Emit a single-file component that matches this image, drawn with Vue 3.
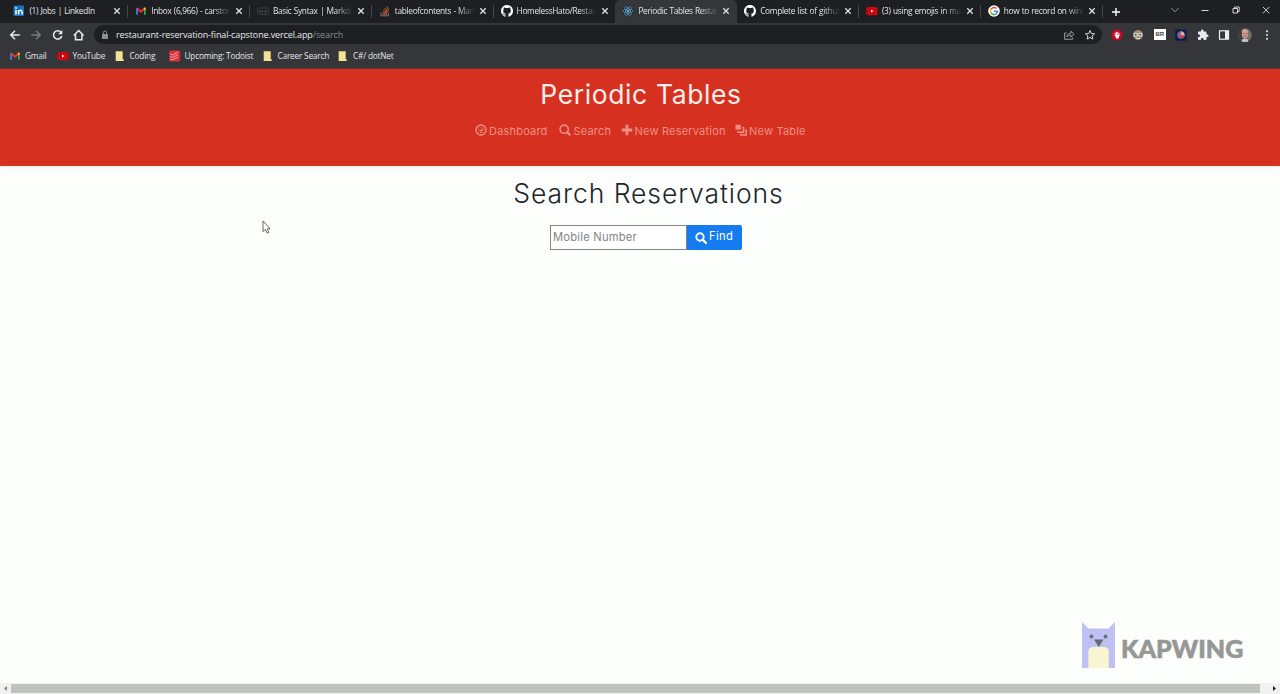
<script setup>
const tabs = [
  { icon: 'linkedin', title: '(1) Jobs | LinkedIn' },
  { icon: 'gmail', title: 'Inbox (6,966) - carston', fade: true },
  { icon: 'md', title: 'Basic Syntax | Markdo', fade: true },
  { icon: 'so', title: 'tableofcontents - Mark', fade: true },
  { icon: 'github', title: 'HomelessHato/Restau', fade: true },
  { icon: 'react', title: 'Periodic Tables Restau', fade: true, active: true },
  { icon: 'github', title: 'Complete list of github', fade: true },
  { icon: 'youtube', title: '(3) using emojis in ma', fade: true },
  { icon: 'google', title: 'how to record on wind', fade: true },
]
const bookmarks = [
  { icon: 'gmail', title: 'Gmail', w: 47.5 },
  { icon: 'youtube', title: 'YouTube', w: 57 },
  { icon: 'folder', title: 'Coding', w: 55 },
  { icon: 'todoist', title: 'Upcoming: Todoist', w: 93 },
  { icon: 'folder', title: 'Career Search', w: 75.5 },
  { icon: 'folder', title: 'C#/ dotNet', w: 70 },
]
</script>

<template>
  <svg class="defs" aria-hidden="true">
    <symbol id="linkedin" viewBox="0 0 12 12">
      <rect x=".5" y=".5" width="10.500" height="10.500" rx="1" fill="#1674bd" />
      <path d="M3 5v4.500M5.600 9.500V5M5.600 7c0-2.200 3.400-2.300 3.400 0v2.500" stroke="#fff" stroke-width="1.500" fill="none" />
      <circle cx="3" cy="3" r=".9" fill="#fff" />
    </symbol>
    <symbol id="gmail" viewBox="0 0 12 12">
      <path d="M2 9.800V3" stroke="#4285f4" stroke-width="1.700" />
      <path d="M9.800 9.800V4" stroke="#34a853" stroke-width="1.700" />
      <path d="M1.900 3 5.900 6.700 9.900 3" stroke="#e0392f" stroke-width="1.900" fill="none" />
      <path d="M9.800 5V2.600" stroke="#fbbc04" stroke-width="1.700" />
    </symbol>
    <symbol id="md" viewBox="0 0 12 12">
      <rect x=".5" y="3" width="11" height="6.500" rx="1" fill="none" stroke="#3b3d40" />
      <path d="M2.500 8V5l1.400 1.600L5.300 5v3M8.500 4.700v3M7.200 6.500l1.300 1.500 1.300-1.500" fill="none" stroke="#46484b" stroke-width=".9" />
    </symbol>
    <symbol id="so" viewBox="0 0 12 12">
      <path d="M2 7.500v3.300h7.500V7.500" stroke="#777" fill="none" />
      <path d="M3.500 9.200h4.500M3.600 7.400l4.500.7M4.300 5.300l4 2M5.800 3.200l3.100 3.300M8 1.500l1.700 4" stroke="#b9542c" stroke-width="1.100" />
    </symbol>
    <symbol id="github" viewBox="0 0 16 16">
      <path fill="#fff" d="M8 0C3.58 0 0 3.58 0 8c0 3.540 2.290 6.530 5.470 7.590.4.070.55-.17.55-.38 0-.19-.01-.82-.01-1.490-2.010.37-2.530-.49-2.690-.94-.09-.23-.48-.94-.82-1.130-.28-.15-.68-.52-.01-.53.63-.01 1.080.58 1.230.82.72 1.210 1.870.87 2.330.66.07-.52.28-.87.51-1.070-1.780-.2-3.640-.89-3.640-3.950 0-.87.31-1.590.82-2.150-.08-.2-.36-1.020.08-2.120 0 0 .67-.21 2.200.82a7.500 7.500 0 0 1 4 0c1.530-1.040 2.200-.82 2.200-.82.44 1.100.16 1.920.08 2.120.51.56.82 1.270.82 2.150 0 3.070-1.870 3.750-3.650 3.950.29.25.54.73.54 1.480 0 1.070-.01 1.930-.01 2.200 0 .21.15.46.55.38A8 8 0 0 0 16 8c0-4.420-3.580-8-8-8z" />
    </symbol>
    <symbol id="react" viewBox="0 0 12 12">
      <circle cx="6" cy="6" r="5.500" fill="#202c35" />
      <g fill="none" stroke="#5793b5" stroke-width=".8">
        <ellipse cx="6" cy="6" rx="5" ry="2" />
        <ellipse cx="6" cy="6" rx="5" ry="2" transform="rotate(60 6 6)" />
        <ellipse cx="6" cy="6" rx="5" ry="2" transform="rotate(120 6 6)" />
      </g>
      <circle cx="6" cy="6" r="1" fill="#8bc5e0" />
    </symbol>
    <symbol id="youtube" viewBox="0 0 12 12">
      <rect x=".3" y="2" width="11.200" height="8.300" rx="1.600" fill="#c90812" />
      <path d="M5 4.700 7.500 6.100 5 7.600z" fill="#fff" />
    </symbol>
    <symbol id="google" viewBox="0 0 12 12">
      <circle cx="6" cy="6" r="5.800" fill="#fff" />
      <g fill="none" stroke-width="1.500">
        <path d="M8.600 3.600A3.500 3.500 0 0 0 3 4.300" stroke="#ea4335" />
        <path d="M3 4.300a3.500 3.500 0 0 0 0 3.500" stroke="#fbbc05" />
        <path d="M3 7.800a3.500 3.500 0 0 0 5.300.9" stroke="#34a853" />
        <path d="M8.300 8.700A3.500 3.500 0 0 0 9.500 6.200H6" stroke="#4285f4" />
      </g>
    </symbol>
    <symbol id="folder" viewBox="0 0 12 12">
      <path d="M1.700 1.200h7v8.100h1v1.700h-8z" fill="#f5e394" />
    </symbol>
    <symbol id="todoist" viewBox="0 0 12 12">
      <rect x=".2" y=".5" width="11" height="11" rx="1.500" fill="#d92f35" />
      <path d="m1 3.800 2.500 1.200L9 2M1 6.300l2.500 1.200L9 4.500M1 8.800 3.500 10 9 7" stroke="#f4b9b5" stroke-width=".9" fill="none" />
    </symbol>
  </svg>

  <div class="screen">
    <div class="tabstrip">
      <div v-for="(t, i) in tabs" :key="i" class="tab" :class="{ active: t.active, bare: i === 4 }">
        <svg class="fav"><use :href="'#' + t.icon" /></svg>
        <span class="title" :class="{ fade: t.fade }">{{ t.title }}</span>
        <svg class="close" viewBox="0 0 8 8"><path d="m1.300 1.300 5.400 5.400M6.700 1.300 1.300 6.700" /></svg>
      </div>
      <svg class="plus" viewBox="0 0 10 10"><path d="M5 1v8M1 5h8" /></svg>
      <div class="controls">
        <svg viewBox="0 0 10 10"><path d="m1.500 3.200 3.500 3.500 3.500-3.500" stroke="#999" /></svg>
        <svg viewBox="0 0 10 10"><path d="M1.500 5.500h7" /></svg>
        <svg viewBox="0 0 10 10"><path d="M2 3.500h4.500V8H2zM3.500 3.500V2h4.700v4.500H6.500" /></svg>
        <svg viewBox="0 0 10 10"><path d="m2 2 6.300 6.300M8.300 2 2 8.300" /></svg>
      </div>
    </div>

    <div class="toolbar">
      <div class="nav">
        <svg viewBox="0 0 12 12"><path d="M10.800 6H2M6 1.800 1.800 6 6 10.200" /></svg>
        <svg class="dim" viewBox="0 0 12 12"><path d="M1.200 6H10M6 1.800 10.200 6 6 10.200" /></svg>
        <svg viewBox="0 0 12 12"><path d="M9 3.200A4.200 4.200 0 1 0 9.800 7" /><path d="M10.300 1v4.200H6.100z" fill="#e8eaed" stroke="none" /></svg>
        <svg viewBox="0 0 12 12"><path d="M.8 6.500 5.700 1.500l4.900 5M2.500 5.500v5.300h6.400V5.500" /></svg>
      </div>
      <div class="omnibox">
        <svg class="lock" viewBox="0 0 8 10"><rect x="1" y="4" width="6" height="5" rx=".6" fill="#8b8d90" /><path d="M2.400 4V2.600a1.600 1.600 0 0 1 3.200 0V4" fill="none" stroke="#8b8d90" /></svg>
        <span class="url">restaurant-reservation-final-capstone.vercel.app<i>/search</i></span>
        <svg class="share" viewBox="0 0 12 12"><path d="M3.500 4H1.600v6.300h8V8.500M3.800 7.800C4 5.500 5.500 4.300 8 4.200V2.200l3 3-3 3V6.300C6 6.200 5 6.600 3.800 7.800z" /></svg>
        <svg class="star" viewBox="0 0 12 12"><path d="m6 1.500 1.300 3 3.300.3-2.500 2.100.8 3.200L6 8.400l-2.900 1.700.8-3.200L1.400 4.800l3.300-.3z" /></svg>
      </div>
      <div class="ext">
        <svg viewBox="0 0 12 12"><path d="M3.500.7h5l2.800 2.800v5l-2.800 2.800h-5L.7 8.500v-5z" fill="#c60b25" /><path d="M4.200 6.500V3.700M5.500 6V2.800M6.800 6V3M8 7V4" stroke="#fff" stroke-width=".9" /><path d="M3.800 6h4.600l-1 3.400H5.300z" fill="#fff" /></svg>
        <svg viewBox="0 0 12 12"><circle cx="6" cy="6" r="5" fill="#a3856e" /><circle cx="3.700" cy="5.700" r="2.300" fill="#d5d4cb" /><circle cx="8.300" cy="5.700" r="2.300" fill="#d5d4cb" /><circle cx="3.700" cy="5.700" r=".9" fill="#444" /><circle cx="8.300" cy="5.700" r=".9" fill="#444" /><path d="M4 9.500h4" stroke="#ddd" /></svg>
        <span class="br">BR</span>
        <svg viewBox="0 0 12 12"><rect x=".3" y=".5" width="11.400" height="11.200" rx="1" fill="#101c46" /><circle cx="6" cy="6" r="3.700" fill="#5379c5" /><path d="M6 2.300a3.700 3.700 0 0 1 3.500 4.500L6 6z" fill="#e7b1a1" /><path d="M6 6 9.500 7A3.700 3.700 0 0 1 3.500 8.500z" fill="#d43d3b" /><path d="M3.500 4h2v2h-2z" fill="#e8443f" /></svg>
        <svg viewBox="0 0 24 24"><path fill="#e8eaed" d="M20.500 11H19V7a2 2 0 0 0-2-2h-4V3.500a2.500 2.500 0 0 0-5 0V5H4a2 2 0 0 0-2 2v3.800h1.500a2.700 2.700 0 0 1 0 5.400H2V20a2 2 0 0 0 2 2h3.800v-1.500a2.700 2.700 0 0 1 5.400 0V22H17a2 2 0 0 0 2-2v-4h1.500a2.500 2.500 0 0 0 0-5z" /></svg>
        <svg viewBox="0 0 12 12"><rect x="1.500" y="1.800" width="9" height="8.400" fill="none" stroke="#eee" stroke-width="1.200" /><path d="M7 2h3.500v8H7z" fill="#eee" /></svg>
        <svg class="avatar" viewBox="0 0 14 14"><circle cx="7" cy="7" r="6.700" fill="#77736a" /><path d="M1 4a7 7 0 0 1 4-3.500V13A7 7 0 0 1 .5 8z" fill="#383c37" /><ellipse cx="6.800" cy="6" rx="3" ry="4.500" fill="#d89890" /><path d="M3.500 4C4 .8 9.600.8 10 4 8 2.600 5.500 2.600 3.500 4" fill="#ccb8a8" /><path d="M4.500 11h5l1 2.200a7 7 0 0 1-7 0z" fill="#b9c5c8" /><path d="M4.700 5.600h1.500M7.500 5.600H9M5.500 8.300h2.800" stroke="#803e3d" stroke-width=".7" /></svg>
        <svg viewBox="0 0 12 12"><g fill="#e8eaed"><circle cx="6" cy="2.300" r="1" /><circle cx="6" cy="6" r="1" /><circle cx="6" cy="9.700" r="1" /></g></svg>
      </div>
    </div>

    <div class="bookmarks">
      <div v-for="b in bookmarks" :key="b.title" class="bm" :style="{ width: b.w + 'px' }">
        <svg class="fav"><use :href="'#' + b.icon" /></svg><span>{{ b.title }}</span>
      </div>
    </div>

    <header>
      <h1>Periodic Tables</h1>
      <nav class="links">
        <a class="l1"><svg viewBox="0 0 12 12"><circle cx="6" cy="6" r="5" fill="none" stroke="currentColor" stroke-width="1.400" /><path d="M3 5.500h1M4.300 3.500l.6.700M6.300 3v.8M8.800 6H8M6.300 6.500 8 4.200" stroke="currentColor" fill="none" /><circle cx="6" cy="7.300" r="1.300" fill="none" stroke="currentColor" /></svg><span>Dashboard</span></a>
        <a class="l2"><svg viewBox="0 0 12 12"><circle cx="5.200" cy="5.200" r="4.100" fill="none" stroke="currentColor" stroke-width="1.600" /><path d="m8 8 3.200 3.200" stroke="currentColor" stroke-width="2.200" /></svg><span>Search</span></a>
        <a class="l3"><svg viewBox="0 0 12 12"><path d="M6 .8v10.400M.8 6h10.400" stroke="currentColor" stroke-width="2.800" /></svg><span>New Reservation</span></a>
        <a class="l4"><svg viewBox="0 0 12 12"><path d="M.5.800h5.300v4.800H.5z" fill="currentColor" /><path d="M7.300 3.500H8.500v4.800H3V7M10 6.200h1.300v4.700H5.800V9.700" fill="none" stroke="currentColor" stroke-width="1.500" /></svg><span>New Table</span></a>
      </nav>
    </header>

    <main>
      <h2>Search Reservations</h2>
      <div class="form">
        <div class="field">Mobile Number</div>
        <div class="find"><svg viewBox="0 0 12 12"><circle cx="5" cy="5" r="3.700" fill="none" stroke="#fff" stroke-width="1.900" /><path d="m7.600 7.600 3.300 3.300" stroke="#fff" stroke-width="2.200" stroke-linecap="round" /></svg><span>Find</span></div>
      </div>
    </main>

    <div class="scroll">
      <svg viewBox="0 0 11 11"><path d="M7 3v5L4 5.500z" fill="#888" /></svg>
      <div class="thumb"></div>
      <svg class="right" viewBox="0 0 11 11"><path d="M4 3v5l3-2.500z" fill="#222" /></svg>
    </div>

    <div class="kapwing">
      <svg viewBox="0 0 33 46">
        <path d="M0 0 6.500 6.500h20L33 0v46H0z" fill="#bfc0f3" />
        <path d="M6.300 46V30q0-5 5-5h10.500q5 0 5 5v16z" fill="#f8f5d0" />
        <circle cx="9.500" cy="14.500" r="1.900" fill="#66727b" /><circle cx="23.500" cy="14.500" r="1.900" fill="#66727b" />
        <path d="M12 17.500h9.500L16.800 25z" fill="#66696b" />
      </svg>
      <span>KAPWING</span>
    </div>
    <svg class="cursor" viewBox="0 0 9 14"><path d="M1 1v10.500l2.400-2 1.800 3.700 1.700-.8-1.700-3.600h2.900z" fill="#fff" stroke="#555" stroke-width=".9" /></svg>
  </div>
</template>

<style>
body { background: #fcfefc; overflow: hidden; }
</style>

<style scoped>
* { box-sizing: border-box; }
.defs { position: absolute; width: 0; height: 0; }
.screen { position: relative; width: 1280px; height: 694px; display: flex; flex-direction: column; background: #fcfefc; font-family: "Open Sans", "Noto Sans", sans-serif; overflow: hidden; white-space: nowrap; }
svg { display: block; flex: none; }
.tabstrip { height: 23px; display: flex; align-items: center; background: #1e1f22; padding-left: 6.400px; }
.tab { position: relative; width: 121.800px; height: 23px; display: flex; align-items: center; padding: 0 0 1px 7px; flex: none; }
.tab::after { content: ""; position: absolute; right: 0; top: 5px; width: 1px; height: 13px; background: #45474b; }
.tab.active::after, .tab.bare::after { display: none; }
.tab.active { background: #35363a; border-radius: 5px 5px 0 0; }
.fav { width: 12px; height: 12px; }
.title { width: 80px; margin-left: 4px; font-size: 8.300px; line-height: 12px; letter-spacing: -.3px; word-spacing: .4px; color: #e4e5e7; }
.title.fade { mask-image: linear-gradient(90deg, #000 78%, transparent 100%); }
.close { width: 8px; height: 8px; margin-left: 4px; }
.close path { stroke: #e0e1e3; stroke-width: 1.300; }
.plus { width: 10px; height: 10px; margin-left: 8.500px; }
.plus path { stroke: #fff; stroke-width: 1.400; }
.controls { margin-left: auto; padding-right: 9px; display: flex; gap: 20.500px; margin-top: -4px; }
.controls svg { width: 10px; height: 10px; fill: none; stroke: #d5d5d5; stroke-width: 1; }
.toolbar { height: 23px; background: #35363a; display: flex; align-items: center; padding-left: 9px; }
.nav { display: flex; gap: 9.400px; width: 85px; }
.nav svg { width: 12px; height: 12px; fill: none; stroke: #e8eaed; stroke-width: 1.500; }
.nav .dim { stroke: #77797d; }
.omnibox { width: 1008px; height: 19px; border-radius: 10px; background: #1e1f22; display: flex; align-items: center; padding: 0 6px 0 7px; }
.lock { width: 8px; height: 10px; }
.url { margin-left: 7px; font-size: 9px; letter-spacing: -.12px; color: #e8eaed; }
.url i { font-style: normal; color: #85888c; }
.share { width: 12px; height: 12px; margin-left: auto; fill: none; stroke: #a5a7aa; stroke-width: .9; }
.star { width: 12px; height: 12px; margin-left: 9px; fill: none; stroke: #d5d7da; stroke-width: 1; }
.ext { display: flex; align-items: center; gap: 9.400px; margin-left: 9px; }
.ext svg { width: 12px; height: 12px; }
.ext .avatar { width: 14px; height: 14px; margin: 0 -1px; }
.br { width: 12px; height: 11px; background: #fff; color: #444; font: bold 6px/11px "Liberation Sans", sans-serif; text-align: center; }
.bookmarks { height: 22.500px; background: #35363a; display: flex; align-items: center; padding-left: 9px; padding-bottom: 2px; border-bottom: 1px solid #6b3632; flex: none; }
.bm { display: flex; align-items: center; flex: none; font-size: 8.300px; line-height: 12px; letter-spacing: -.22px; color: #e4e5e7; }
.bm span { margin-left: 4px; }
header { height: 97px; background: #d63021; box-shadow: 0 1px 4px #0001; font-family: Inter, "Open Sans", sans-serif; flex: none; }
h1 { margin: 0; padding: 7px 0 0 2px; font-weight: 400; font-size: 26.500px; line-height: 36px; text-align: center; color: #fdeeea; letter-spacing: .6px; }
.links { display: flex; margin: 11px 0 0 475px; color: #ef8f83; font-size: 11px; line-height: 14px; }
.links a { display: flex; align-items: center; flex: none; }
.links svg { width: 12px; height: 12px; margin-top: -1px; }
.links span { margin-left: 2px; letter-spacing: .2px; padding-top: 1px; }
.l1 { width: 83.500px; }
.l2 { width: 62px; }
.links .l2 span { margin-left: 3px; }
.l3 { width: 114.500px; }
main { font-family: Inter, "Open Sans", sans-serif; }
h2 { margin: 0; padding: 9.500px 0 0 17px; font-weight: 300; font-size: 26.500px; line-height: 36px; text-align: center; color: #212529; letter-spacing: .92px; }
.form { display: flex; margin: 13.500px 0 0 549.500px; height: 25.500px; font-size: 11.200px; line-height: 23px; }
.field { width: 137.500px; border: 1px solid #858585; background: #fff; color: #858585; padding-left: 2.500px; letter-spacing: .22px; }
.find { width: 55px; background: #147bf0; color: #fff; border-radius: 0 2px 2px 0; display: flex; align-items: center; padding-left: 8px; }
.find svg { width: 12px; height: 12px; margin-top: 1px; }
.find span { margin: -1px 0 0 2px; letter-spacing: .35px; }
.scroll { height: 11px; margin-top: auto; background: #f0f1f0; display: flex; align-items: center; }
.scroll svg { width: 11px; height: 11px; }
.thumb { width: 1249px; height: 9px; background: #c1c3c1; }
.right { margin-left: 9px; }
.kapwing { position: absolute; left: 1081.500px; top: 622px; display: flex; align-items: center; }
.kapwing svg { width: 33px; height: 46px; }
.kapwing span { margin: 5px 0 0 6.500px; font: 900 25px/30px Lato, sans-serif; letter-spacing: .05px; color: #969896; -webkit-text-stroke: .6px #969896; }
.cursor { position: absolute; left: 261.500px; top: 220px; width: 9px; height: 14px; }
</style>
